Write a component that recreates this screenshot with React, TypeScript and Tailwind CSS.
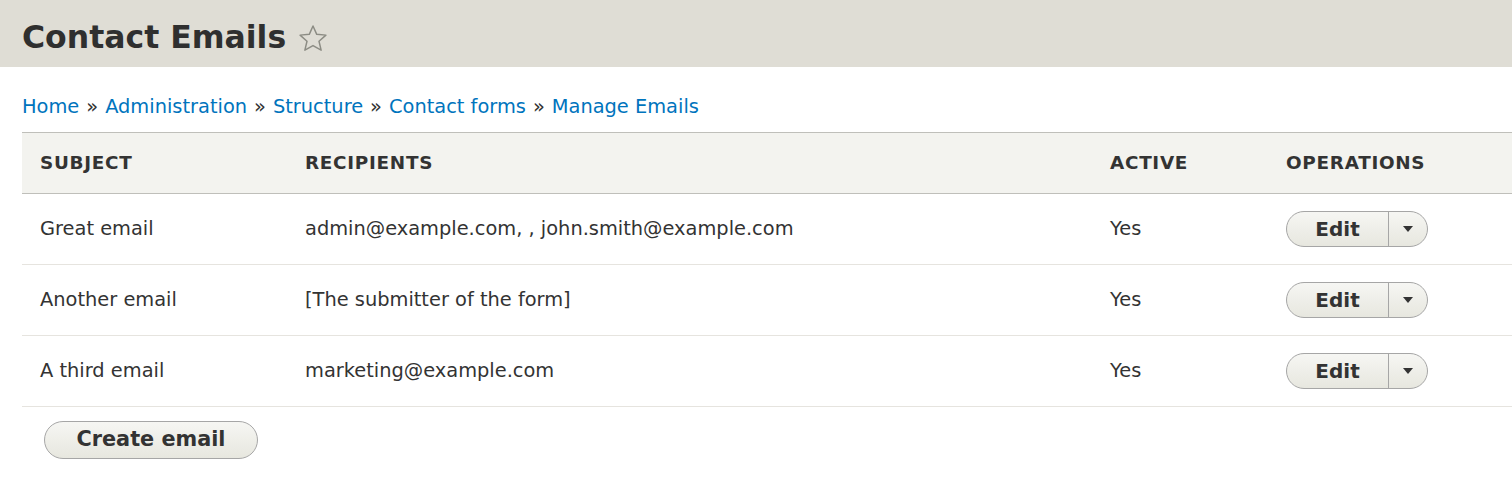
import React from "react";

const rows = [
  { subject: "Great email", recipients: "admin@example.com, , john.smith@example.com" },
  { subject: "Another email", recipients: "[The submitter of the form]" },
  { subject: "A third email", recipients: "marketing@example.com" },
];

function Star() {
  return (
    <svg width="32" height="32" viewBox="0 0 24 24" className="ml-[11px] mt-[2px]">
      <path
        d="M12 2.2l2.8 6.3 6.9.6-5.2 4.6 1.6 6.7L12 16.9l-6.1 3.5 1.6-6.7-5.2-4.6 6.9-.6z"
        fill="none"
        stroke="#8c8c84"
        strokeWidth="1.1"
        strokeLinejoin="round"
      />
    </svg>
  );
}

function EditButton() {
  return (
    <div className="flex h-[36px] w-[142px] rounded-full border border-[#a6a6a6] bg-gradient-to-b from-[#f6f6f3] to-[#e7e7df] text-[#333]">
      <div className="flex w-[102px] items-center justify-center border-r border-[#a6a6a6] text-[20px] font-bold">
        Edit
      </div>
      <div className="flex flex-1 items-center justify-center">
        <svg width="10" height="6" viewBox="0 0 10 6">
          <path d="M0 0h10L5 6z" fill="#333" />
        </svg>
      </div>
    </div>
  );
}

export default function App() {
  return (
    <div className="min-h-[490px] bg-white text-[#333]" style={{ fontFamily: '"DejaVu Sans", sans-serif' }}>
      <div className="flex h-[67px] items-center bg-[#dfddd5] pl-[22px] pt-[8px]">
        <h1 className="text-[31.5px] font-bold leading-none text-[#2f2f2f]">Contact Emails</h1>
        <Star />
      </div>
      <div className="pl-[22px]">
        <div className="flex h-[65px] items-center pt-[15px] text-[19.4px] text-[#0074bd]">
          <span>Home</span>
          <span className="mx-[7px] text-[#333]">»</span>
          <span>Administration</span>
          <span className="mx-[7px] text-[#333]">»</span>
          <span>Structure</span>
          <span className="mx-[7px] text-[#333]">»</span>
          <span>Contact forms</span>
          <span className="mx-[7px] text-[#333]">»</span>
          <span>Manage Emails</span>
        </div>
        <table className="w-full border-collapse text-left text-[19.4px]">
          <thead>
            <tr className="h-[61px] border-y border-[#bfbfba] bg-[#f3f3ef] text-[18.4px] font-bold uppercase tracking-[0.7px] text-[#333]">
              <th className="w-[265px] pl-[18px] font-bold">Subject</th>
              <th className="w-[805px] pl-[18px] font-bold">Recipients</th>
              <th className="w-[176px] pl-[18px] font-bold">Active</th>
              <th className="pl-[18px] font-bold">Operations</th>
            </tr>
          </thead>
          <tbody>
            {rows.map((r) => (
              <tr key={r.subject} className="h-[71px] border-b border-[#e6e4df]">
                <td className="pl-[18px]">{r.subject}</td>
                <td className="pl-[18px]">{r.recipients}</td>
                <td className="pl-[18px]">Yes</td>
                <td className="pl-[18px]">
                  <EditButton />
                </td>
              </tr>
            ))}
          </tbody>
        </table>
        <div className="pl-[22px] pt-[14px]">
          <button className="h-[38px] w-[214px] rounded-full border border-[#a6a6a6] bg-gradient-to-b from-[#f6f6f3] to-[#e7e7df] text-[20.8px] font-bold text-[#333]">
            Create email
          </button>
        </div>
      </div>
    </div>
  );
}
